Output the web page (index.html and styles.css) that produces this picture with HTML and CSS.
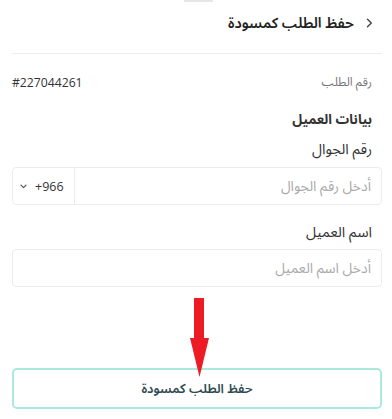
FILE: index.html
```html
<!DOCTYPE html>
<html lang="ar" dir="rtl">
<head>
<meta charset="utf-8">
<link rel="stylesheet" href="styles.css">
</head>
<body>
<div class="page">
  <div class="notch"></div>
  <header class="header">
    <svg class="back" width="7" height="10" viewBox="0 0 7 10"><path d="M1.5 1.2 L5.3 5 L1.5 8.8" fill="none" stroke="#444" stroke-width="1.4" stroke-linecap="round" stroke-linejoin="round"/></svg>
    <h1 class="title">حفظ الطلب كمسودة</h1>
  </header>
  <div class="divider"></div>
  <main class="content">
    <div class="order-row">
      <span class="order-label">رقم الطلب</span>
      <span class="order-num" dir="ltr">#227044261</span>
    </div>
    <div class="section-title">بيانات العميل</div>
    <div class="field-label">رقم الجوال</div>
    <div class="box phone">
      <span class="placeholder">أدخل رقم الجوال</span>
      <div class="code" dir="ltr">
        <svg class="caret" width="7" height="5" viewBox="0 0 7 5"><path d="M1 1.2 L3.5 3.7 L6 1.2" fill="none" stroke="#555" stroke-width="1.2" stroke-linecap="round" stroke-linejoin="round"/></svg>
        <span class="code-text">+966</span>
      </div>
    </div>
    <div class="field-label name-label">اسم العميل</div>
    <div class="box name">
      <span class="placeholder">أدخل اسم العميل</span>
    </div>
    <button class="save-btn">حفظ الطلب كمسودة</button>
  </main>
  <svg class="arrow" width="20" height="80" viewBox="0 0 20 80"><rect x="4" y="0" width="10" height="41" fill="#ED1C24"/><polygon points="0,40 19,40 9.5,79" fill="#ED1C24"/></svg>
</div>
</body>
</html>
```
FILE: styles.css
```css
* { box-sizing: border-box; }
html, body { margin: 0; padding: 0; background: #fff; }
body {
  font-family: "Open Sans", "Noto Sans Arabic", "DejaVu Sans", sans-serif;
  color: #333;
}
.page { position: relative; width: 392px; height: 419px; overflow: hidden; }
.notch { width: 29px; height: 2px; background: #e6e6e6; margin: 0 auto; transform: translateX(2px); }
.header { height: 51px; display: flex; align-items: center; gap: 12px; padding-right: 19px; padding-bottom: 10px; }
.back { display: block; margin-top: 1px; }
.title { margin: 0; font-size: 14.5px; font-weight: 600; color: #222; line-height: 20px; }
.divider { height: 1px; background: #eeeeee; margin: 0 10px 0 12px; }
.content { padding: 0 10px 0 12px; }
.order-row { margin-top: 18px; height: 20px; display: flex; justify-content: space-between; align-items: center; padding-right: 10px; }
.order-label { font-size: 12px; color: #777; }
.order-num { font-size: 12.2px; color: #333; }
.section-title { margin-top: 17px; line-height: 20px; height: 20px; font-size: 13.5px; font-weight: 700; color: #333; padding-right: 10px; }
.field-label { margin-top: 10px; line-height: 20px; height: 20px; font-size: 14.5px; color: #333; padding-right: 10px; }
.name-label { margin-top: 17px; }
.box { height: 38px; border: 1px solid #ececec; border-radius: 4px; display: flex; align-items: center; }
.phone { margin-top: 8px; }
.name { margin-top: 7px; }
.placeholder { flex: 1; font-size: 14px; color: #aaa; padding-right: 10px; }
.code { width: 62px; height: 100%; border-right: 1px solid #ececec; display: flex; align-items: center; gap: 8px; padding-left: 7px; }
.caret { display: block; }
.code-text { font-size: 12.5px; color: #333; }
.save-btn { display: block; width: 100%; margin-top: 81px; height: 41px; background: #fff; border: 2px solid #abe9db; border-radius: 5px; font-family: inherit; font-size: 12.8px; font-weight: 600; color: #2e4a50; }
.arrow { position: absolute; left: 190px; top: 298px; }
```
